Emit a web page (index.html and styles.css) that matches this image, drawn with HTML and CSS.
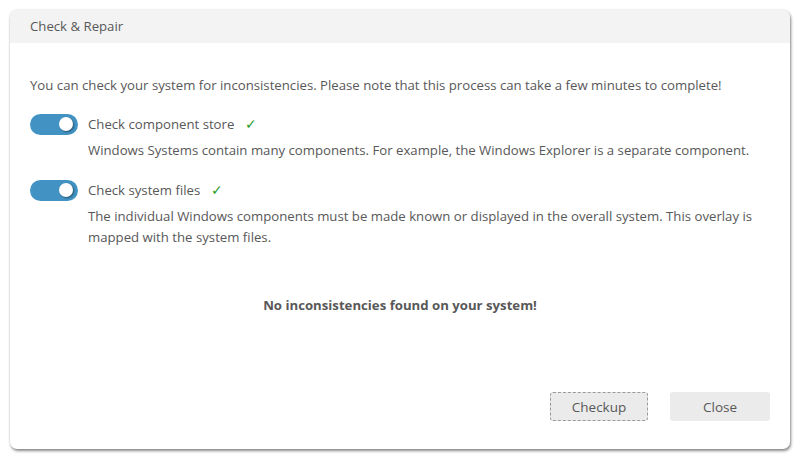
FILE: index.html
```html
<!DOCTYPE html>
<html>
<head>
<meta charset="utf-8">
<link rel="stylesheet" href="styles.css">
</head>
<body>
<div class="dialog">
  <div class="header">Check &amp; Repair</div>
  <div class="body">
    <p class="intro">You can check your system for inconsistencies. Please note that this process can take a few minutes to complete!</p>
    <div class="option">
      <div class="row">
        <span class="toggle"><span class="knob"></span></span>
        <span class="label">Check component store</span>
        <span class="check">✓</span>
      </div>
      <p class="desc">Windows Systems contain many components. For example, the Windows Explorer is a separate component.</p>
    </div>
    <div class="option">
      <div class="row">
        <span class="toggle"><span class="knob"></span></span>
        <span class="label">Check system files</span>
        <span class="check">✓</span>
      </div>
      <p class="desc">The individual Windows components must be made known or displayed in the overall system. This overlay is mapped with the system files.</p>
    </div>
    <p class="result">No inconsistencies found on your system!</p>
    <div class="buttons">
      <button class="btn focused">Checkup</button>
      <button class="btn">Close</button>
    </div>
  </div>
</div>
</body>
</html>
```
FILE: styles.css
```css
html, body {
  margin: 0;
  padding: 0;
  background: #ffffff;
}
body {
  padding: 10px;
  font-family: "Open Sans", "Noto Sans", sans-serif;
  font-size: 13.2px;
  color: #585858;
}
.dialog {
  width: 780px;
  height: 439px;
  box-sizing: border-box;
  background: #ffffff;
  border-radius: 7px;
  box-shadow: 1px 2px 3px rgba(0,0,0,0.45), 0 0 2px rgba(0,0,0,0.15);
  display: flex;
  flex-direction: column;
  overflow: hidden;
}
.header {
  height: 33px;
  background: #f3f3f3;
  padding-left: 20px;
  display: flex;
  align-items: center;
  line-height: 1;
}
.body {
  flex: 1;
  padding: 0 20px 28px 20px;
  display: flex;
  flex-direction: column;
}
.intro {
  margin: 32px 0 0 0;
  line-height: 20px;
}
.option {
  margin-top: 18px;
}
.option + .option {
  margin-top: 18px;
}
.row {
  display: flex;
  align-items: center;
  height: 22px;
}
.toggle {
  width: 48px;
  height: 21px;
  border-radius: 11px;
  background: #4293c4;
  position: relative;
  margin-right: 10px;
}
.knob {
  position: absolute;
  width: 14px;
  height: 14px;
  border-radius: 50%;
  background: #ffffff;
  top: 3.5px;
  right: 5px;
  box-shadow: 1px 1px 2px rgba(0,0,0,0.45);
}
.check {
  color: #2a9d2a;
  margin-left: 11px;
  font-size: 13.5px;
  font-family: "DejaVu Sans", sans-serif;
  font-weight: 300;
}
.desc {
  margin: 5px 0 0 58px;
  line-height: 21px;
}
.result {
  margin: 48px 0 0 0;
  text-align: center;
  font-weight: bold;
}
.buttons {
  margin-top: auto;
  display: flex;
  justify-content: flex-end;
  gap: 22px;
}
.btn {
  width: 98px;
  height: 29px;
  border: 1px solid transparent;
  border-radius: 3px;
  background: #ebebeb;
  font-family: inherit;
  font-size: 13.5px;
  color: #585858;
  padding: 0;
}
.btn + .btn {
  width: 100px;
}
.btn.focused {
  border: 1px dashed #9a9a9a;
}
```
